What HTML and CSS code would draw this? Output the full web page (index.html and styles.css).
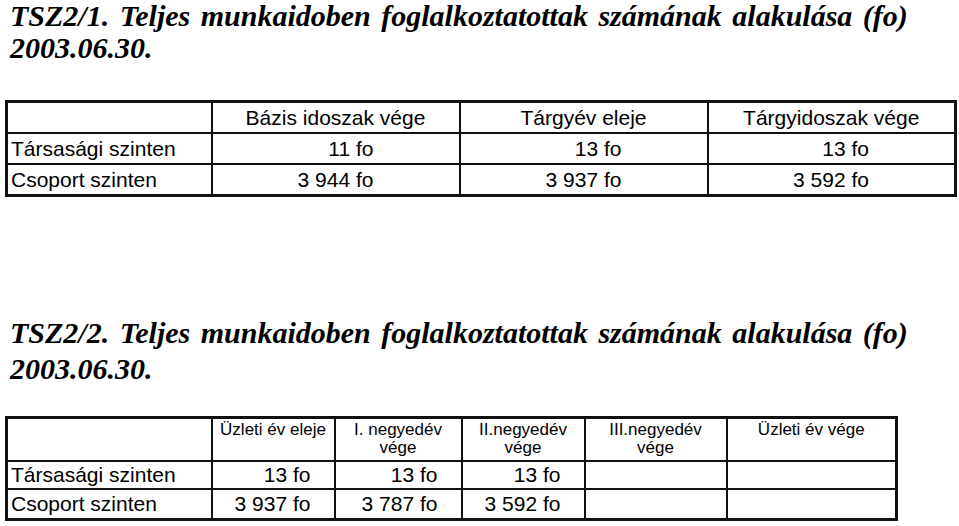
FILE: index.html
```html
<!DOCTYPE html>
<html lang="hu">
<head>
<meta charset="utf-8">
<title>TSZ2</title>
<link rel="stylesheet" href="styles.css">
</head>
<body>
<section class="block block-first">
  <h1 class="title title-first">TSZ2/1. Teljes munkaidoben foglalkoztatottak számának alakulása (fo) 2003.06.30.</h1>
  <table class="grid grid-one">
    <colgroup>
      <col class="c-label"><col class="c-wide"><col class="c-wide"><col class="c-wide">
    </colgroup>
    <tr class="row-head">
      <td></td>
      <td class="head">Bázis idoszak vége</td>
      <td class="head">Tárgyév eleje</td>
      <td class="head">Tárgyidoszak vége</td>
    </tr>
    <tr class="row-data">
      <td class="label">Társasági szinten</td>
      <td class="num">11 fo</td>
      <td class="num">13 fo</td>
      <td class="num">13 fo</td>
    </tr>
    <tr class="row-data">
      <td class="label">Csoport szinten</td>
      <td class="num">3 944 fo</td>
      <td class="num">3 937 fo</td>
      <td class="num">3 592 fo</td>
    </tr>
  </table>
</section>
<section class="block block-second">
  <h1 class="title title-second">TSZ2/2. Teljes munkaidoben foglalkoztatottak számának alakulása (fo) 2003.06.30.</h1>
  <table class="grid grid-two">
    <colgroup>
      <col class="d-label"><col class="d-a"><col class="d-b"><col class="d-c"><col class="d-d"><col class="d-e">
    </colgroup>
    <tr class="row-head2">
      <td></td>
      <td class="head2">Üzleti év eleje</td>
      <td class="head2">I. negyedév<br>vége</td>
      <td class="head2">II.negyedév<br>vége</td>
      <td class="head2">III.negyedév<br>vége</td>
      <td class="head2">Üzleti év vége</td>
    </tr>
    <tr class="row-data2">
      <td class="label">Társasági szinten</td>
      <td class="num2">13 fo</td>
      <td class="num2">13 fo</td>
      <td class="num2">13 fo</td>
      <td></td>
      <td></td>
    </tr>
    <tr class="row-data2 row-last">
      <td class="label">Csoport szinten</td>
      <td class="num2">3 937 fo</td>
      <td class="num2">3 787 fo</td>
      <td class="num2">3 592 fo</td>
      <td></td>
      <td></td>
    </tr>
  </table>
</section>
</body>
</html>
```

FILE: styles.css
```css
html, body {
  margin: 0;
  padding: 0;
  background: #ffffff;
  color: #000000;
}

body {
  width: 959px;
  height: 526px;
  overflow: hidden;
}

.block {
  padding-left: 5px;
}

.title {
  margin: 0;
  padding-left: 5px;
  font-family: "Liberation Serif", "Times New Roman", serif;
  font-weight: bold;
  font-style: italic;
  font-size: 30px;
  word-spacing: 3px;
  width: 930px;
}

.title-first {
  line-height: 32px;
}

.title-second {
  line-height: 36px;
  margin-top: 118px;
}

.grid {
  border-collapse: collapse;
  table-layout: fixed;
  font-family: "Liberation Sans", Arial, sans-serif;
  color: #000;
}

.grid td {
  padding: 0;
  border: 2px solid #111;
  white-space: nowrap;
}

.grid-one {
  margin-top: 36px;
  width: 950px;
  border: 3px solid #111;
  font-size: 21px;
}

.c-label { width: 205px; }
.c-wide { width: 248px; }

.row-head td, .row-data td {
  height: 29px;
  vertical-align: middle;
}

.head {
  text-align: center;
}

.label {
  text-align: left;
  padding-left: 3px !important;
}

.num {
  text-align: right;
  padding-right: 85px !important;
}

.grid-two {
  margin-top: 29px;
  width: 890px;
  border: 3px solid #111;
  font-size: 21px;
}

.d-label { width: 205px; }
.d-a { width: 123px; }
.d-b { width: 127px; }
.d-c { width: 123px; }
.d-d { width: 142px; }
.d-e { width: 170px; }

.row-head2 td {
  height: 39px;
  vertical-align: top;
}

.head2 {
  font-size: 17px;
  line-height: 18px;
  text-align: center;
  padding-top: 2px !important;
}

.row-data2 td {
  height: 26px;
  vertical-align: middle;
}

.row-last td {
  height: 28px;
}

.num2 {
  text-align: right;
  padding-right: 23px !important;
}
```
